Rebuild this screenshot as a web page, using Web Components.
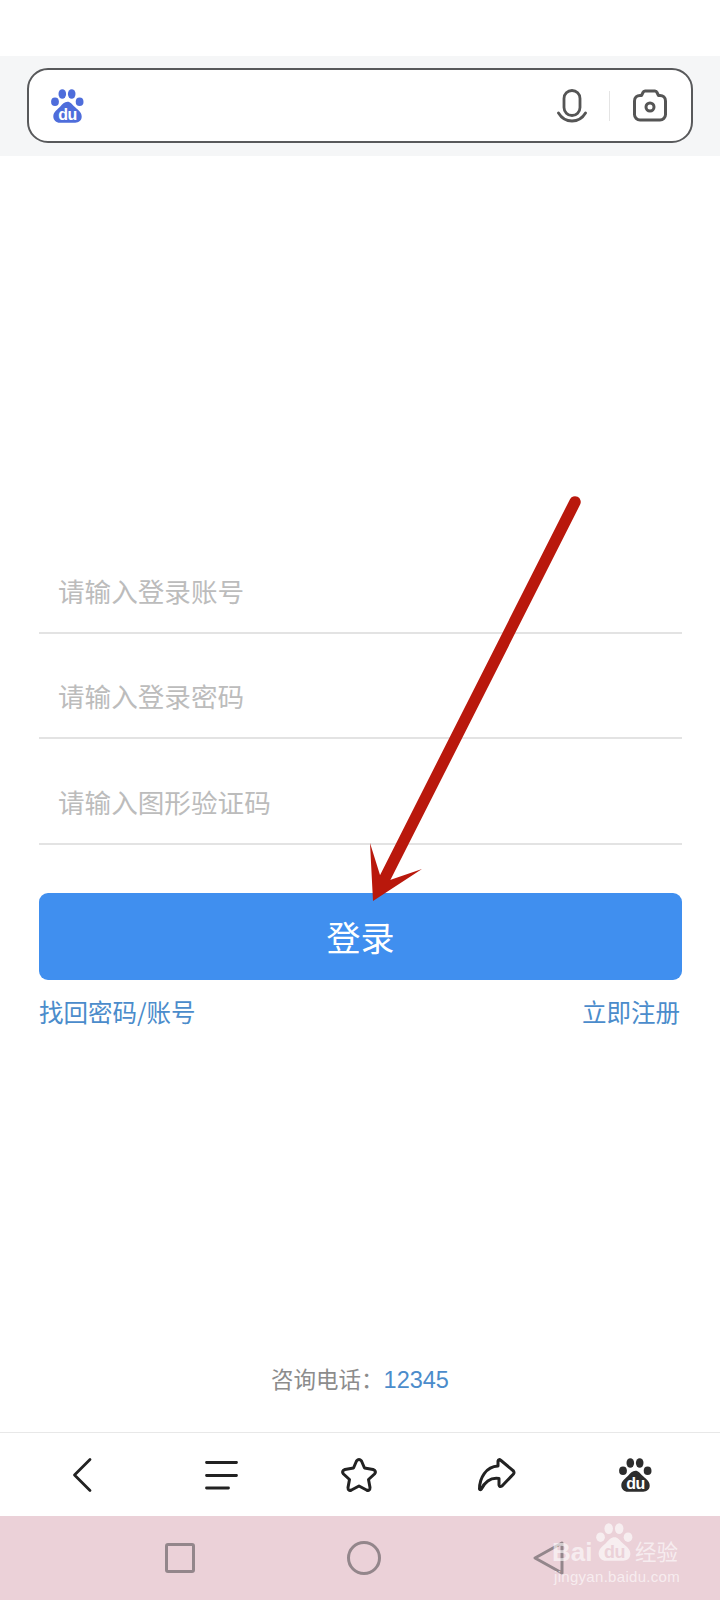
<!DOCTYPE html>
<html lang="zh">
<head>
<meta charset="utf-8">
<title>登录</title>
<style>
	html, body { margin: 0; padding: 0; background: #fff; }
	body {
		width: 720px;
		height: 1600px;
		overflow: hidden;
		position: relative;
		display: flex;
		flex-direction: column;
		font-family: "Noto Sans CJK SC", "Noto Sans", sans-serif;
	}
</style>
</head>
<body>
	<search-bar></search-bar>
	<login-form>
		<form-field>请输入登录账号</form-field>
		<form-field>请输入登录密码</form-field>
		<form-field>请输入图形验证码</form-field>
	</login-form>
	<contact-line></contact-line>
	<nav-bar></nav-bar>
	<system-bar></system-bar>
	<red-arrow></red-arrow>
	<baidu-watermark></baidu-watermark>

<script>
(function() {
	// the paw, drawn in a 33x34 box
	const PAW = `
		<ellipse cx="11.3" cy="5" rx="3.8" ry="4.8"/>
		<ellipse cx="20.7" cy="5" rx="3.8" ry="4.8"/>
		<ellipse cx="4" cy="12.7" rx="3.9" ry="4.3"/>
		<ellipse cx="28.6" cy="12.7" rx="3.9" ry="4.3"/>
		<path d="M16.5 12.7c3 0 4.5 2.5 6.500 4.500 3 3 7.700 5.500 7.700 10.300 0 4-3 6.200-6.500 6.200H8.800c-3.500 0-6.500-2.500-6.500-6.500 0-4.500 4.500-7 7-9.800 2-2.200 4-4.700 7.200-4.700z"/>`;

	function define(name, html) {
		const template = document.createElement("template");
		template.innerHTML = html;
		customElements.define(name, class extends HTMLElement {
			constructor() {
				super();
				this.attachShadow({mode: "open"}).appendChild(template.content.cloneNode(true));
			}
		});
	}

	define("search-bar", `
		<style>
			:host { display: block; margin-top: 56px; height: 100px; padding: 12px 27px 0; box-sizing: border-box; background: #f5f6f7; flex: none; }
			.box { height: 75px; box-sizing: border-box; border: 2.500px solid #58595b; border-radius: 21px; background: #fff; display: flex; align-items: center; padding: 0 24px 0 22px; }
			.spacer { flex: 1; }
			.logo { fill: #4e6ddb; display: block; margin-top: 1px; }
			.logo text { fill: #fff; font: 700 16px "Liberation Sans", sans-serif; letter-spacing: -.4px; }
			.sep { width: 1px; height: 30px; background: #e4e4e4; margin: 0 23px 0 22px; }
			svg { display: block; }
		</style>
		<div class="box">
			<svg class="logo" width="33" height="34" viewBox="0 0 33 34"><g>${PAW}</g><text x="16.500" y="31" text-anchor="middle">du</text></svg>
			<div class="spacer"></div>
			<svg width="30" height="34" viewBox="0 0 30 34" fill="none" stroke="#555" stroke-width="2.800" stroke-linecap="round">
				<rect x="7" y="1.500" width="16" height="25" rx="8"/>
				<path d="M1.500 24c3 5 8 8 13.500 8s10.500-3 13.500-8"/>
			</svg>
			<div class="sep"></div>
			<svg width="34" height="33" viewBox="0 0 34 33" fill="none" stroke="#555" stroke-width="3" stroke-linejoin="round">
				<path d="M7 6.500h1.500l1.500-3q.5-1.500 2-1.500h10q1.500 0 2 1.500l1.500 3h1.500c3 0 5.500 2 5.500 5.500v13.500c0 3-2.500 5.500-5.500 5.500h-20c-3 0-5.500-2.500-5.500-5.500v-13.500c0-3.500 2.500-5.500 5.500-5.500z"/>
				<circle cx="17" cy="18" r="4"/>
			</svg>
		</div>`);

	define("form-field", `
		<style>
			:host { display: flex; align-items: center; height: 105.500px; box-sizing: border-box; padding: 21px 0 0 19px; border-bottom: 2px solid #e3e3e3; color: #bcbcbc; font-size: 26.600px; }
		</style>
		<slot></slot>`);

	define("login-form", `
		<style>
			:host { display: block; padding: 372px 38px 0 39px; flex: none; }
			button { display: block; width: 100%; height: 87px; margin-top: 48px; border: 0; border-radius: 9px; background: #408fef; color: #fff; font: 34px "Noto Sans CJK SC", sans-serif; padding: 0; }
			.links { display: flex; justify-content: space-between; margin-top: 12px; font-size: 24.500px; line-height: 40px; color: #4b8ccb; padding-right: 2px; }
		</style>
		<slot></slot>
		<button type="button">登录</button>
		<div class="links"><span>找回密码/账号</span><span>立即注册</span></div>`);

	define("contact-line", `
		<style>
			:host { display: block; flex: 1; text-align: center; font-size: 22.500px; color: #8c8c8c; padding-top: 326px; line-height: 40px; box-sizing: border-box; }
			.tel { color: #4b8ccb; font-family: "Liberation Sans", sans-serif; font-size: 23.500px; }
		</style>
		<span>咨询电话：<span class="tel">12345</span></span>`);

	define("nav-bar", `
		<style>
			:host { display: grid; grid-template-columns: repeat(5, 138.250px); height: 84px; box-sizing: border-box; border-top: 1.500px solid #e8e8e8; background: #fff; flex: none; align-items: center; justify-items: center; padding-left: 13px; }
			svg { display: block; overflow: visible; }
			.menu { margin-left: 3px; }
			.paw { fill: #2d2d2d; }
			.paw text { fill: #fff; font: 700 16px "Liberation Sans", sans-serif; letter-spacing: -.4px; }
		</style>
		<svg width="18" height="34" viewBox="0 0 18 34" fill="none" stroke="#222" stroke-width="2.800" stroke-linecap="round" stroke-linejoin="round"><path d="M17 1.500 1.500 17 17 32.500"/></svg>
		<svg class="menu" width="33" height="28" viewBox="0 0 33 28" fill="none" stroke="#222" stroke-width="2.800" stroke-linecap="round"><path d="M1.500 1.500h30M1.500 14.500h30M1.500 27h22"/></svg>
		<svg width="36" height="34" viewBox="0 0 36 34" fill="none" stroke="#222" stroke-width="3" stroke-linejoin="round"><path d="M15.500 3Q18 0 20.500 3L23.500 10 32 11.500Q36 13 33.500 16L27.500 21.500 29 29.500Q29 33.500 25.500 32L18 28 10.500 32Q7 33.500 7 29.500L8.500 21.500 2.500 16Q0 13 4 11.500L12.500 10z"/></svg>
		<svg width="37" height="33" viewBox="0 0 37 33" fill="none" stroke="#222" stroke-width="3" stroke-linecap="round" stroke-linejoin="round"><path d="M1.500 31C1.500 20 8 8.500 20 8V3Q20.500.5 23 2.500L35.500 13Q36.500 14.500 35.500 16L24 28Q21.500 29.500 21 27V20.500C12 19 6 25 3.500 31Q2 32.500 1.500 31z"/></svg>
		<svg class="paw" width="33" height="34" viewBox="0 0 33 34"><g>${PAW}</g><text x="16.500" y="31" text-anchor="middle">du</text></svg>`);

	define("system-bar", `
		<style>
			:host { display: flex; height: 84px; background: #ebd1d8; flex: none; align-items: center; justify-content: space-between; padding: 0 156px 0 165px; }
			svg { display: block; overflow: visible; }
		</style>
		<svg width="30" height="30" viewBox="0 0 30 30" fill="none" stroke="#93868b" stroke-width="3"><rect x="1.500" y="1.500" width="27" height="27" rx="1.500"/></svg>
		<svg width="34" height="34" viewBox="0 0 34 34" fill="none" stroke="#93868b" stroke-width="3"><circle cx="17" cy="17" r="15.500"/></svg>
		<svg width="31" height="34" viewBox="0 0 31 34" fill="none" stroke="#93868b" stroke-width="3" stroke-linejoin="round"><path d="M29 2 2 17l27 15z"/></svg>`);

	// sits over the form, free-drawn annotation
	define("red-arrow", `
		<style>
			:host { display: block; position: absolute; left: 0; top: 0; width: 720px; height: 1600px; pointer-events: none; }
			svg { display: block; }
		</style>
		<svg width="720" height="1600" viewBox="0 0 720 1600">
			<path d="M575 502 385 878" fill="none" stroke="#b9180c" stroke-width="11.500" stroke-linecap="round"/>
			<path d="M370 843 380 875 390 880 422 869 373 901z" fill="#b9180c"/>
		</svg>`);

	define("baidu-watermark", `
		<style>
			:host { display: block; position: absolute; left: 552px; top: 1522px; width: 130px; height: 64px; color: rgba(255,255,255,.62); pointer-events: none; }
			.paw { position: absolute; left: 44px; top: 1px; fill: rgba(255,255,255,.62); }
			.paw text { fill: #ebd1d8; font: 700 16px "Liberation Sans", sans-serif; letter-spacing: -.4px; }
			.bai { position: absolute; left: 0; top: 14px; font: 700 26px/32px "Liberation Sans", sans-serif; }
			.jy { position: absolute; left: 83px; top: 16px; font-size: 21.500px; line-height: 26px; white-space: nowrap; }
			.url { position: absolute; left: 2px; top: 45px; font: 15px/20px "Liberation Sans", sans-serif; letter-spacing: .3px; white-space: nowrap; }
		</style>
		<span class="bai">Bai</span>
		<svg class="paw" width="37" height="38" viewBox="0 0 33 34"><g>${PAW}</g><text x="16.500" y="31" text-anchor="middle">du</text></svg>
		<span class="jy">经验</span>
		<span class="url">jingyan.baidu.com</span>`);
})();
</script>
</body>
</html>
